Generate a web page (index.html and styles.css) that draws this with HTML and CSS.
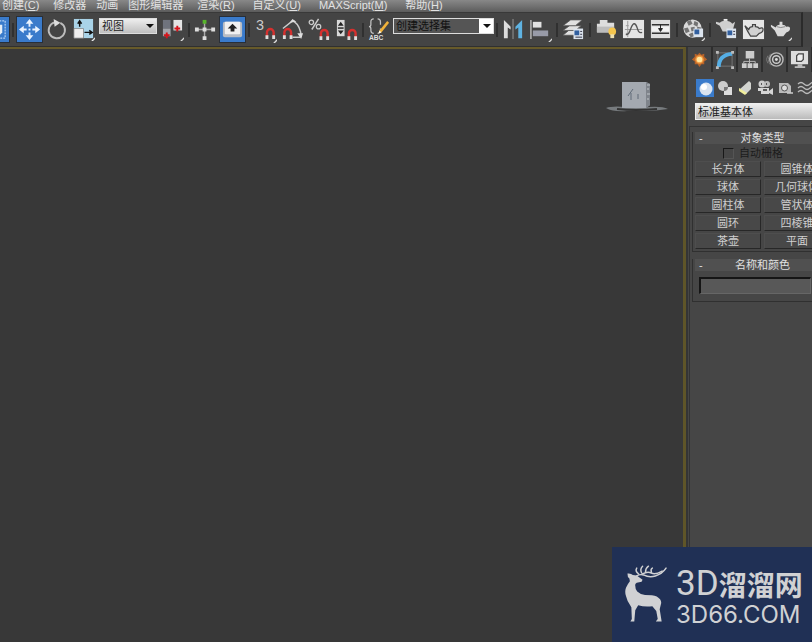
FILE: index.html
```html
<!DOCTYPE html>
<html lang="zh-CN">
<head>
<meta charset="utf-8">
<title>3D 视图</title>
<link rel="stylesheet" href="styles.css">
</head>
<body>
<nav class="menubar">
  <a class="accel" href="#">创建(<u>C</u>)</a>
  <a href="#">修改器</a>
  <a href="#">动画</a>
  <a href="#">图形编辑器</a>
  <a class="accel" href="#">渲染(<u>R</u>)</a>
  <a class="accel" href="#">自定义(<u>U</u>)</a>
  <a class="accel" href="#">MAXScript(<u>M</u>)</a>
  <a class="accel" href="#">帮助(<u>H</u>)</a>
</nav>

<div class="toolbar">
  <button class="tool on lead" aria-label="选择区域"><svg viewBox="0 0 24 24"><path d="M3 3h18v18H3z" fill="none" stroke="#d5e8ff" stroke-dasharray="2 1"/><path d="M8 7h10v8l-3 3H8z" fill="#e8eef5"/></svg></button>
  <span class="sep"></span>
  <button class="tool on" aria-label="移动"><svg viewBox="0 0 24 24"><g fill="#e9f3ff"><path d="M12 1l4 5h-3v3h-2V6H8zM12 23l4-5h-3v-3h-2v3H8zM1 12l5-4v3h3v2H6v3zM23 12l-5-4v3h-3v2h3v3z"/><path d="M11 11h2v2h-2z"/></g></svg></button>
  <button class="tool" aria-label="旋转"><svg viewBox="0 0 24 24"><path d="M10 4.500a8.500 8.500 0 1 0 6 .5" fill="none" stroke="#bdbdbd" stroke-width="2"/><path d="M9 1l7 4-6 4z" fill="#ddd"/></svg></button>
  <button class="tool" aria-label="缩放"><svg viewBox="0 0 24 24"><path d="M2 1h20v20H2z" fill="#a9d3e8"/><path d="M2 11h10v10H2z" fill="#eee" stroke="#777" stroke-width=".7"/><path d="M8 9V4M6 6l2-3 2 3M13 15h7M18 13l3 2-3 2" fill="none" stroke="#111" stroke-width="1.500"/><path d="M20 24l4-4v2l-2 2z" fill="#eee"/></svg></button>
  <label class="combo coord"><select aria-label="参考坐标系"><option>视图</option></select></label>
  <button class="tool" aria-label="轴心"><svg viewBox="0 0 24 24"><path d="M2 2h8v9H2z" fill="#6f737d"/><path d="M2 11h8v8H2z" fill="#a3a5ab"/><path d="M13 2h9v11h-9z" fill="#e4e4e4"/><path d="M6 15v6M3 18h6M17 8v6M14 11h6" stroke="#d5141b" stroke-width="2"/><path d="M20 24l4-4v2l-2 2z" fill="#ddd"/></svg></button>
  <span class="sep"></span>
  <button class="tool" aria-label="操纵"><svg viewBox="0 0 24 24"><path d="M11 4v17M3 12h17" stroke="#aaa" stroke-width="1.500"/><path d="M9 10h4v4H9zM1 10h4v4H1zM18 10h4v4h-4zM9 19h4v4H9z" fill="#ddd"/><path d="M9 2h4v4H9z" fill="#57b52b"/></svg></button>
  <button class="tool on" aria-label="键盘快捷键"><svg viewBox="0 0 24 24"><rect x="2" y="4" width="20" height="16" rx="2" fill="#b8bdc4"/><rect x="4" y="4" width="16" height="13" rx="1" fill="#f1f1f1"/><path d="M12 6l5 5h-3v3h-4v-3H7z" fill="#222"/></svg></button>
  <span class="sep"></span>
  <button class="tool" aria-label="三维捕捉"><svg viewBox="0 0 24 24"><text x="2" y="12" class="three">3</text><path d="M13.500 19v-4a3.500 3.500 0 0 1 7 0v4" fill="none" stroke="#d5302e" stroke-width="2.500"/><path d="M12 18h3v4h-3zM19 18h3v4h-3z" fill="#ddd"/><path d="M20 26l4-4v2l-2 2z" fill="#ddd"/></svg></button>
  <button class="tool" aria-label="角度捕捉"><svg viewBox="0 0 24 24"><path d="M2 11l10-8M20 20h-8M13 3q8 6 8 17" fill="none" stroke="#ccc" stroke-width="1.500"/><path d="M9 5l3-4 4 3zM17 16h6l-2 6z" fill="#ddd"/><path d="M3.500 19v-4a3.500 3.500 0 0 1 7 0v4" fill="none" stroke="#d5302e" stroke-width="2.500"/><path d="M2 18h3v4H2zM9 18h3v4H9z" fill="#ddd"/></svg></button>
  <button class="tool" aria-label="百分比捕捉"><svg viewBox="0 0 24 24"><path d="M11 1L4 12" stroke="#ccc" stroke-width="1.500"/><circle cx="3.500" cy="4.500" r="2.300" fill="none" stroke="#ccc" stroke-width="1.300"/><circle cx="11" cy="9" r="2.300" fill="none" stroke="#ccc" stroke-width="1.300"/><path d="M13.500 20v-4a3.500 3.500 0 0 1 7 0v4" fill="none" stroke="#d5302e" stroke-width="2.500"/><path d="M12 19h3v4h-3zM19 19h3v4h-3z" fill="#ddd"/></svg></button>
  <button class="tool" aria-label="微调器捕捉"><svg viewBox="0 0 24 24"><path d="M2 2h8v17H2z" fill="#d8d8d8"/><path d="M3 8l3-4 3 4zM3 13l3 4 3-4z" fill="#222"/><path d="M3 10.500h6" stroke="#222" stroke-width="1.500"/><path d="M14.500 20v-4a3.500 3.500 0 0 1 7 0v4" fill="none" stroke="#d5302e" stroke-width="2.500"/><path d="M13 19h3v4h-3zM20 19h3v4h-3z" fill="#ddd"/></svg></button>
  <span class="sep"></span>
  <button class="tool" aria-label="编辑命名选择集"><svg viewBox="0 0 24 24"><path d="M6 1q-3 0-3 3v3q0 2-2 2 2 0 2 2v2q0 3 3 3M10 1q3 0 3 3v3M13 11v2q0 3-3 3" fill="none" stroke="#c4c4c4" stroke-width="1.300"/><path d="M20 3l2 2-8 10-3 1 1-3z" fill="#f1b23a"/><path d="M11 16l1-3 2 2z" fill="#fff"/><text x="1" y="23" class="abc">ABC</text></svg></button>
  <label class="combo named"><select aria-label="命名选择集"><option>创建选择集</option></select></label>
  <span class="sep"></span>
  <button class="tool" aria-label="镜像"><svg viewBox="0 0 24 24"><path d="M2 2l7 7v3l-3-2v11H2z" fill="#ddd"/><path d="M21 2l-7 7v3l3-2v11h4z" fill="#5fb3e2"/><path d="M11.500 1v21" stroke="#999"/></svg></button>
  <button class="tool" aria-label="对齐"><svg viewBox="0 0 24 24"><path d="M2 2v20" stroke="#bbb" stroke-width="1.500"/><path d="M4 4h9v6H4z" fill="#e2e2e2"/><path d="M4 13h16v6H4z" fill="#989ba8"/><path d="M20 25l4-4v2l-2 2z" fill="#ddd"/></svg></button>
  <span class="sep"></span>
  <button class="tool" aria-label="层管理器"><svg viewBox="0 0 24 24"><g fill="#e0e0e0" stroke="#555" stroke-width=".8"><path d="M1 18l6-5h13l-6 5z"/><path d="M1 13l7-5h12l-6 5z"/><path d="M1 8l8-6h12l-7 6z"/></g><path d="M12 11h10v11H12z" fill="#dce4ee"/><path d="M13 13h5v5h-5z" fill="#315f9f"/><path d="M19 14h2M19 17h2M14 20h7" stroke="#334"/></svg></button>
  <span class="sep"></span>
  <button class="tool" aria-label="功能区"><svg viewBox="0 0 24 24"><path d="M2 6h3V2h8v3h7v10H2z" fill="#ddd"/><path d="M2 9h18v6H2z" fill="#bcbcbc"/><circle cx="18" cy="14" r="4" fill="#f5c64e"/><path d="M16 17h4v4h-4z" fill="#eee0b0"/></svg></button>
  <button class="tool" aria-label="曲线编辑器"><svg viewBox="0 0 24 24"><path d="M1 2h22v19H1z" fill="#e4e4e4"/><path d="M6 3v17M3 12h18M4 8h3M4 16h3" stroke="#999"/><path d="M4 17c5 2 5-12 9-11s2 11 8 9" fill="none" stroke="#555" stroke-width="1.400"/></svg></button>
  <button class="tool" aria-label="图解视图"><svg viewBox="0 0 24 24"><path d="M2 2h20v19H2z" fill="#ddd"/><path d="M3 7h18M3 16h18" stroke="#333" stroke-width="1.500"/><path d="M3 9h18v5H3z" fill="#f2f2f2"/><path d="M12 7v4M10 11l2 3 2-3z" fill="#222" stroke="#222"/></svg></button>
  <span class="sep"></span>
  <button class="tool" aria-label="材质编辑器"><svg viewBox="0 0 24 24"><circle cx="11" cy="11" r="9.500" fill="#dadada"/><path d="M5 4l4-2 2 4-4 2zM13 3l4 2-1 4-4-2zM2 11l4-1 2 4-4 2zM9 10l4-1 1 4-4 1zM16 9l4 1-1 5-4-2zM7 17l4-2 2 4-4 1z" fill="#737373"/><path d="M12 11h10v9H12z" fill="#dce4ee"/><path d="M13 12h5v5h-5z" fill="#315f9f"/><path d="M20 24l4-4v2l-2 2z" fill="#ddd"/></svg></button>
  <span class="sep"></span>
  <button class="tool" aria-label="渲染设置"><svg viewBox="0 0 24 24"><path d="M1 4l4 1c2-3 11-3 13 1l3-2-2 7-3 3H8L5 8 1 6z" fill="#cfcfcf"/><path d="M9 1h4v2H9z" fill="#eee"/><path d="M12 11h10v10H12z" fill="#dce4ee"/><path d="M13 13h5v5h-5z" fill="#315f9f"/><path d="M19 14h2M19 17h2" stroke="#334"/></svg></button>
  <button class="tool" aria-label="渲染帧窗口"><svg viewBox="0 0 24 24"><path d="M1 2h22v20H1z" fill="#e6e6e6"/><path d="M3 8l4 4q1-3 4-3V7h3v2q3 0 4 2 4-2 4 1 0 3-4 4l-3 3H9l-3-5z" fill="#d2d2d2" stroke="#444" stroke-width="1.300"/></svg></button>
  <button class="tool" aria-label="渲染产品"><svg viewBox="0 0 24 24"><path d="M2 7l5 3q1-3 4-3V4h3v3q3 0 4 2 4-1 4 2 0 3-4 4l-3 4H9l-3-6-4-4z" fill="#dadada"/><path d="M8 9q4 2 9 0" fill="none" stroke="#888"/><path d="M20 24l4-4v2l-2 2z" fill="#ddd"/></svg></button>
</div>

<div class="workspace">
  <main class="viewport">
    <svg class="viewcube" viewBox="0 0 64 34" role="img" aria-label="视图方块"><path d="M1 28q8-3 28 0h6q20-3 28 1-12 2-24 2H22Q8 32 1 28z" fill="#777b7e"/><path d="M12 29q18 2 40 0" fill="none" stroke="#333" stroke-width="2"/><path d="M17 2h24l4 2v21l-4 3H17z" fill="#a4a9b0"/><path d="M41 2l4 2v21l-4 3z" fill="#7f848b"/><path d="M42 5h3M42 9h2M42 14h3M42 19h2" stroke="#c2c6ca"/><path d="M28 9l-5 7M26 13v7M33 14v5" stroke="#606b78"/></svg>
  </main>
  <aside class="panel">
    <div class="panel-body">
      <div class="tabs">
        <button aria-label="创建"><svg viewBox="0 0 20 20"><path d="M10 3l2 2 3-1v3l3 3-3 2v3h-3l-2 3-2-3H5v-3l-3-2 3-3V4l3 1z" fill="#b8642a"/><circle cx="10" cy="10" r="4.500" fill="#f0963c"/><circle cx="10" cy="10" r="3" fill="#ffe6a0"/></svg></button>
        <button aria-label="修改"><svg viewBox="0 0 20 20"><path d="M3 3h15v14H3z" fill="none" stroke="#777"/><path d="M4 18Q4 5 18 4" fill="none" stroke="#55aee5" stroke-width="4"/><path d="M1 1h3v3H1zM17 1h3v3h-3zM1 17h3v3H1zM17 17h3v3h-3z" fill="#bbb"/></svg></button>
        <button aria-label="层次"><svg viewBox="0 0 20 20"><path d="M6 1h9v8H6zM2 14h5v5H2zM8 14h5v5H8zM14 14h5v5h-5z" fill="#ccc"/><path d="M10 9v5M4 14v-2h12v2" fill="none" stroke="#bbb"/></svg></button>
        <button aria-label="运动"><svg viewBox="0 0 20 20"><circle cx="12" cy="10" r="7" fill="none" stroke="#bbb" stroke-width="1.500"/><circle cx="12" cy="10" r="4" fill="none" stroke="#ccc" stroke-width="1.500"/><circle cx="12" cy="10" r="1.500" fill="#ddd"/><path d="M6 4q-5 6 0 12M3 6q-3 4 0 8" fill="none" stroke="#777"/></svg></button>
        <button aria-label="显示"><svg viewBox="0 0 20 20"><path d="M1 1h18v14H1z" fill="#ddd"/><path d="M7 6l2-2h5v6l-2 2H7z" fill="#eee" stroke="#444" stroke-width="1.300"/><path d="M8 15h5v2h3v2H5v-2h3z" fill="#bbb"/></svg></button>
      </div>
      <div class="cats">
        <button class="on" aria-label="几何体"><svg viewBox="0 0 18 18"><circle cx="10" cy="10" r="6.500" fill="#d9e3f0"/><circle cx="8" cy="8" r="3" fill="#fff"/></svg></button>
        <button aria-label="图形"><svg viewBox="0 0 18 18"><circle cx="7" cy="7" r="5" fill="#ccc"/><path d="M8 8h8v8H8z" fill="#ddd"/><path d="M8 12V8h4q0 4-4 4z" fill="#777"/></svg></button>
        <button aria-label="灯光"><svg viewBox="0 0 18 18"><path d="M13 2l2 2v6l-5 5-6-5z" fill="#d2d3cf"/><path d="M3 9l8 5-2 2-6-4z" fill="#f1ee9c"/></svg></button>
        <button aria-label="摄影机"><svg viewBox="0 0 18 18"><circle cx="6" cy="5" r="3.500" fill="#ccc"/><circle cx="11" cy="5" r="3" fill="#bbb"/><path d="M5 9h8v6H5zM13 12l4-3v7l-4-2zM2 9h3v3H2z" fill="#d5d5d5"/><path d="M5 5h1M10 5h1M7 11h4" stroke="#333" stroke-width="1.500"/></svg></button>
        <button aria-label="辅助对象"><svg viewBox="0 0 18 18"><path d="M3 4h9l3 3v7H3z" fill="#bbb"/><circle cx="8.500" cy="9" r="3" fill="#ddd" stroke="#555"/><path d="M11 14h6" stroke="#ccc" stroke-width="1.500"/></svg></button>
        <button aria-label="空间扭曲"><svg viewBox="0 0 18 18"><path d="M2 5q3-3 6 0t6 0 4-1M2 9q3-3 6 0t6 0 4-1M2 13q3-3 6 0t6 0 4-1" fill="none" stroke="#bbb" stroke-width="1.300"/></svg></button>
      </div>
      <select class="kind" aria-label="对象类别"><option>标准基本体</option></select>
      <div class="rollouts">
        <section class="rollout">
          <h2><span>-</span>对象类型</h2>
          <label class="autogrid"><input type="checkbox" disabled>自动栅格</label>
          <div class="objects">
            <button>长方体</button><button>圆锥体</button>
            <button>球体</button><button>几何球体</button>
            <button>圆柱体</button><button>管状体</button>
            <button>圆环</button><button>四棱锥</button>
            <button>茶壶</button><button>平面</button>
          </div>
        </section>
        <section class="rollout">
          <h2><span>-</span>名称和颜色</h2>
          <input class="name" type="text" aria-label="名称">
        </section>
      </div>
    </div>
  </aside>
</div>

<div class="brand">
  <svg viewBox="0 0 44 60" aria-hidden="true"><path d="M2.500 8.500Q6 8 8 10l4 .5 6 4.500-1 2-5 1q-2 1-1.500 3 0 4 2 6 3 3 8 3.500 8 0 12 1.500 5 3 4.500 7L35.500 45l2 12.500h-6l2-2.500L32 47l-4-5q-8 1-14.500-1l-3 5-1 11.500h-4L7 55l-.5-12Q2 37 1 31.500-.5 27 1 23q2-4 4-6.500Q5 13 3 12z" fill="#d0d1d3"/><g fill="none" stroke="#d0d1d3" stroke-width="1.500" stroke-linecap="round"><path d="M12 11q3-2 7-1 6 3 12 1 7-2 11-8"/><path d="M18 9q5-3 9-1t11-2M14 9q-4-3-2-6M17 8q-2-4 1-7M21 7q0-4 3-6M27 7q-1-3 1-4"/></g></svg>
  <div class="brand-text"><strong>3D<span>溜溜网</span></strong><em>3D66.COM</em></div>
</div>
</body>
</html>
```
FILE: styles.css
```css
* { box-sizing: border-box; }

body {
  margin: 0;
  height: 100vh;
  display: flex;
  flex-direction: column;
  overflow: hidden;
  position: relative;
  background: #444;
  color: #d0d0d0;
  font: 11px/14px "Liberation Sans", "Noto Sans CJK SC", sans-serif;
}

button, select, input { font: inherit; color: inherit; border-radius: 0; }
button { border: 0; padding: 0; background: none; }
svg { display: block; }

.menubar {
  display: flex;
  flex: none;
  gap: 10px;
  height: 12px;
  margin-left: -2px;
  line-height: 11px;
  white-space: nowrap;
  background: linear-gradient(#888, #5c5c5c);
}
.menubar a { color: #e2e2e2; text-decoration: none; }
.menubar .accel { padding: 0 4px; }

.toolbar {
  display: flex;
  flex: none;
  align-items: center;
  height: 35px;
  margin-right: 9px;
  border-top: 1px solid #393939;
  border-right: 2px solid #2b2b2b;
  border-bottom: 1px solid #303030;
  background: #444;
}
.tool {
  flex: none;
  width: 25px;
  height: 25px;
  margin: 0 1px;
}
.tool svg { width: 23px; height: 23px; margin: 1px; overflow: visible; }
.tool.on { background: #3a7bcb; box-shadow: 0 0 0 1px #292f38; }
.tool.lead { margin-left: -16px; }
.abc { font: bold 7px "Liberation Sans", sans-serif; fill: #ddd; }
.three { font: 15px "Liberation Sans", sans-serif; fill: #ccc; }
.sep { flex: none; width: 2px; height: 14px; margin: 0 2px; background: #303030; }

.combo { position: relative; flex: none; align-self: flex-start; margin-top: 5px; }
.combo select {
  display: block;
  appearance: none;
  width: 100%;
  height: 16px;
  padding: 0 0 0 2px;
}
.combo::after {
  content: "";
  position: absolute;
  right: 3px;
  top: 6px;
  border: 4px solid transparent;
  border-top: 4px solid #111;
}
.coord { width: 58px; margin-left: 2px; margin-right: 2px; }
.coord select { border: 1px solid #ddd; background: linear-gradient(#eee, #bfbfbf); color: #222; }
.named { width: 101px; }
.named select {
  border: 1px solid #ddd;
  background: linear-gradient(90deg, #555 85px, #fff 85px);
  color: #111;
}

.workspace { display: flex; flex: 1; min-height: 0; }
.viewport {
  position: relative;
  flex: 1;
  background: #383838;
  border-top: 2px solid #675a2a;
  border-right: 3px solid #5f5528;
}
.viewcube { position: absolute; right: 14px; top: 31px; width: 64px; height: 34px; }

.panel {
  flex: none;
  width: 126px;
  overflow: hidden;
  border-left: 2px solid #353535;
  background: #464646;
}
.panel-body { width: 148px; }

.tabs { display: flex; height: 25px; }
.tabs button { width: 25px; border-right: 2px solid #2e2e2e; padding: 0 2px; }
.tabs svg { width: 19px; height: 19px; }
.cats { display: flex; gap: 2px; padding: 7px 0 6px 8px; }
.cats button { width: 18px; height: 18px; }
.cats svg { width: 18px; height: 18px; }
.cats .on { background: #3a7bcb; }
.kind {
  display: block;
  appearance: none;
  width: 140px;
  height: 17px;
  margin-left: 7px;
  padding: 0 2px;
  border: 1px solid #eee;
  background: linear-gradient(#eee, #bbb);
  color: #1c1c1c;
}

.rollouts {
  display: flex;
  flex-direction: column;
  gap: 7px;
  margin: 6px 0 0 1px;
  padding: 5px 2px;
  height: 600px;
  border: 1px solid #333;
}
.rollout { padding: 0 2px 2px; border: 1px solid #303030; border-top: 0; }
.rollout h2 {
  position: relative;
  margin: 0 0 2px;
  font-size: 11px;
  line-height: 12px;
  font-weight: 400;
  text-align: center;
  background: #505050;
  color: #e0e0e0;
}
.rollout h2 span { position: absolute; left: 4px; }
.autogrid {
  display: flex;
  align-items: center;
  gap: 5px;
  height: 14px;
  margin: 0 0 1px 28px;
  color: #1c1c1c;
}
.autogrid input {
  appearance: none;
  width: 11px;
  height: 11px;
  margin: 0;
  border: 1px solid #555;
  border-top-color: #181818;
  border-left-color: #181818;
}
.objects { display: grid; grid-template-columns: 1fr 1fr; gap: 2px 3px; }
.objects button {
  height: 16px;
  line-height: 14px;
  background: #484848;
  border: 1px solid #4e4e4e;
  border-right-color: #272727;
  border-bottom-color: #272727;
}
.name {
  display: block;
  width: 112px;
  height: 17px;
  margin: 6px 0 5px 4px;
  background: #585858;
  border: 1px solid #666;
  border-top: 2px solid #151515;
  border-left: 2px solid #151515;
}

.brand {
  position: absolute;
  right: 0;
  bottom: 0;
  display: flex;
  gap: 8px;
  width: 200px;
  height: 95px;
  padding: 18px 0 0 13px;
  background: #203055;
  color: #d0d1d3;
}
.brand svg { flex: none; width: 43px; height: 59px; }
.brand-text { white-space: nowrap; }
.brand strong {
  display: flex;
  align-items: center;
  height: 38px;
  font: 400 35px/38px Roboto, sans-serif;
}
.brand strong span { font: 700 28px/38px "Noto Sans CJK SC", sans-serif; }
.brand em { display: block; font: 400 24px/24px Inter, sans-serif; }
```
